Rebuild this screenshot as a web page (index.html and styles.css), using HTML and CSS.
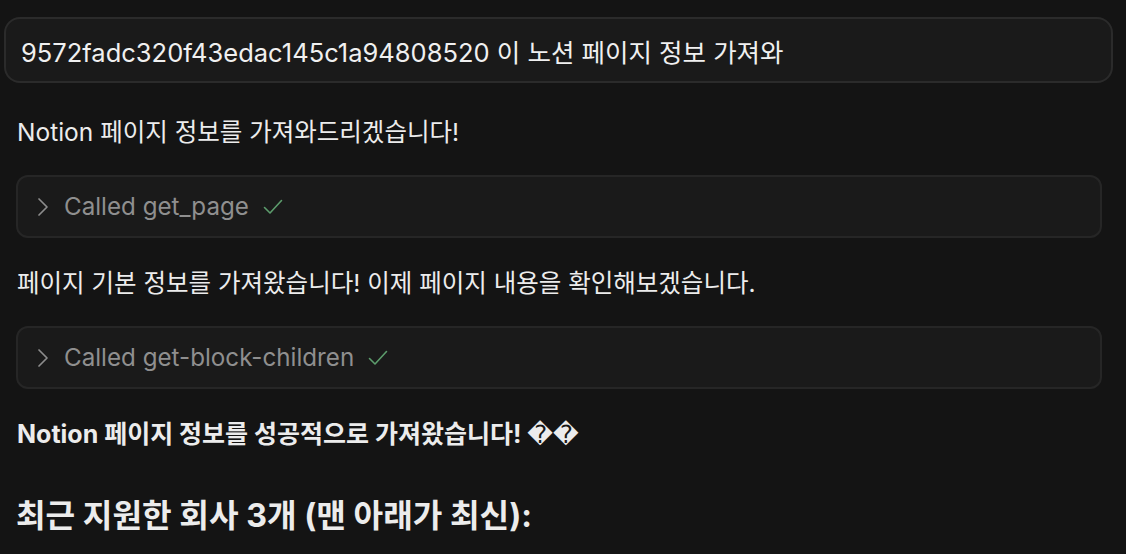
FILE: index.html
```html
<!DOCTYPE html>
<html lang="ko">
<head>
    <meta charset="UTF-8">
    <meta name="viewport" content="width=device-width, initial-scale=1.0">
    <link rel="stylesheet" href="styles.css">
    <title>Chat</title>
</head>
<body>
    <main class="chat">
        <div class="user-message">9572fadc320f43edac145c1a94808520 이 노션 페이지 정보 가져와</div>

        <div class="assistant">
            <p class="reply">Notion 페이지 정보를 가져와드리겠습니다!</p>

            <div class="tool-call">
                <svg class="chevron" width="12" height="20" viewBox="0 0 12 20">
                    <path d="M2 2 L10 10 L2 18" fill="none" stroke="#8c8c8c" stroke-width="1.7" stroke-linecap="round" stroke-linejoin="round"/>
                </svg>
                <span class="tool-name">Called get_page</span>
                <svg class="check" width="20" height="16" viewBox="0 0 20 16">
                    <path d="M1.5 8.5 L7 14 L18.5 1.5" fill="none" stroke="#5c9c6c" stroke-width="1.6" stroke-linecap="round" stroke-linejoin="round"/>
                </svg>
            </div>

            <p class="reply">페이지 기본 정보를 가져왔습니다! 이제 페이지 내용을 확인해보겠습니다.</p>

            <div class="tool-call">
                <svg class="chevron" width="12" height="20" viewBox="0 0 12 20">
                    <path d="M2 2 L10 10 L2 18" fill="none" stroke="#8c8c8c" stroke-width="1.7" stroke-linecap="round" stroke-linejoin="round"/>
                </svg>
                <span class="tool-name">Called get-block-children</span>
                <svg class="check" width="20" height="16" viewBox="0 0 20 16">
                    <path d="M1.5 8.5 L7 14 L18.5 1.5" fill="none" stroke="#5c9c6c" stroke-width="1.6" stroke-linecap="round" stroke-linejoin="round"/>
                </svg>
            </div>

            <p class="reply strong">Notion 페이지 정보를 성공적으로 가져왔습니다! <span class="broken">&#xFFFD;&#xFFFD;</span></p>

            <h2 class="section-title">최근 지원한 회사 3개 (맨 아래가 최신):</h2>
        </div>
    </main>
</body>
</html>
```

FILE: styles.css
```css
body {
    margin: 0;
    padding: 0;
    background-color: #141414;
    color: #ececec;
    font-family: Inter, 'Noto Sans CJK KR', sans-serif;
    overflow: hidden;
}

.chat {
    padding: 17px 13px 0 4px;
}

.user-message {
    background-color: #1a1a1a;
    border: 2px solid #2b2b2b;
    border-radius: 16px;
    height: 66px;
    box-sizing: border-box;
    display: flex;
    align-items: center;
    padding: 0 15px;
    font-size: 25.5px;
    color: #f0f0f0;
}

.assistant {
    padding: 0 11px 0 12px;
}

.reply {
    margin: 32px 0 26px;
    font-size: 24.5px;
    line-height: 34px;
    padding-left: 1px;
}

.reply.strong {
    font-weight: 700;
    font-size: 25px;
    margin-top: 30px;
}

.broken {
    font-family: 'DejaVu Sans', sans-serif;
    font-weight: 400;
}

.tool-call {
    display: flex;
    align-items: center;
    height: 63px;
    box-sizing: border-box;
    background-color: #1a1a1a;
    border: 2px solid #262626;
    border-radius: 12px;
    padding: 0 19px;
    color: #8f8f8f;
    font-size: 24.2px;
}

.tool-call + .reply {
    margin-top: 28px;
}

.chevron {
    margin-right: 15px;
}

.tool-name {
    margin-right: 14px;
}

.section-title {
    margin: 44px 0 0;
    font-size: 32.2px;
    line-height: 40px;
    font-weight: 700;
}
```
